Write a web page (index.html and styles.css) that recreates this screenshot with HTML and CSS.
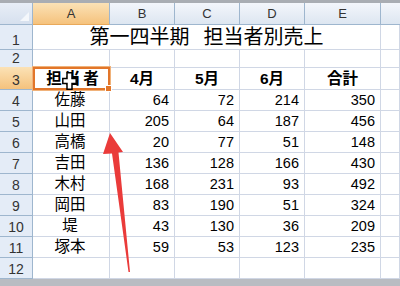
FILE: index.html
```html
<!DOCTYPE html>
<html lang="ja">
<head>
    <meta charset="UTF-8">
    <title>担当者別売上</title>
    <link rel="stylesheet" href="styles.css">
</head>
<body>
<div id="sheet">
    <div class="topbar"></div>
    <div class="row colrow">
        <div class="corner"><span class="tri"></span></div>
        <div class="colhead sel">A</div>
        <div class="colhead">B</div>
        <div class="colhead">C</div>
        <div class="colhead">D</div>
        <div class="colhead">E</div>
        <div class="colhead last"></div>
    </div>
    <div class="row r1">
        <div class="rowhead">1</div>
        <div class="cell title">第一四半期<span class="gap"></span>担当者別売上</div>
        <div class="cell"></div>
    </div>
    <div class="row r2">
        <div class="rowhead">2</div>
        <div class="cell"></div><div class="cell"></div><div class="cell"></div><div class="cell"></div><div class="cell"></div><div class="cell"></div>
    </div>
    <div class="row r3">
        <div class="rowhead sel">3</div>
        <div class="cell head active">担当者<span class="handle"></span>
            <svg class="cursor" width="15" height="18" viewBox="0 0 15 18">
                <path d="M5 0.8h5v5.7h4.2v5h-4.2v5.7h-5v-5.7h-4.2v-5h4.2z" fill="#fff" stroke="#000" stroke-width="1.5"/>
            </svg>
        </div>
        <div class="cell head">4月</div>
        <div class="cell head">5月</div>
        <div class="cell head">6月</div>
        <div class="cell head">合計</div>
        <div class="cell"></div>
    </div>
    <div class="row">
        <div class="rowhead">4</div>
        <div class="cell name">佐藤</div><div class="cell num">64</div><div class="cell num">72</div><div class="cell num">214</div><div class="cell num">350</div><div class="cell"></div>
    </div>
    <div class="row">
        <div class="rowhead">5</div>
        <div class="cell name">山田</div><div class="cell num">205</div><div class="cell num">64</div><div class="cell num">187</div><div class="cell num">456</div><div class="cell"></div>
    </div>
    <div class="row">
        <div class="rowhead">6</div>
        <div class="cell name">高橋</div><div class="cell num">20</div><div class="cell num">77</div><div class="cell num">51</div><div class="cell num">148</div><div class="cell"></div>
    </div>
    <div class="row">
        <div class="rowhead">7</div>
        <div class="cell name">吉田</div><div class="cell num">136</div><div class="cell num">128</div><div class="cell num">166</div><div class="cell num">430</div><div class="cell"></div>
    </div>
    <div class="row">
        <div class="rowhead">8</div>
        <div class="cell name">木村</div><div class="cell num">168</div><div class="cell num">231</div><div class="cell num">93</div><div class="cell num">492</div><div class="cell"></div>
    </div>
    <div class="row">
        <div class="rowhead">9</div>
        <div class="cell name">岡田</div><div class="cell num">83</div><div class="cell num">190</div><div class="cell num">51</div><div class="cell num">324</div><div class="cell"></div>
    </div>
    <div class="row">
        <div class="rowhead">10</div>
        <div class="cell name">堤</div><div class="cell num">43</div><div class="cell num">130</div><div class="cell num">36</div><div class="cell num">209</div><div class="cell"></div>
    </div>
    <div class="row">
        <div class="rowhead">11</div>
        <div class="cell name">塚本</div><div class="cell num">59</div><div class="cell num">53</div><div class="cell num">123</div><div class="cell num">235</div><div class="cell"></div>
    </div>
    <div class="row last-row">
        <div class="rowhead">12</div>
        <div class="cell"></div><div class="cell"></div><div class="cell"></div><div class="cell"></div><div class="cell"></div><div class="cell"></div>
    </div>
    <div class="bottombar"></div>
    <!-- red arrow drawn over the sheet -->
    <svg class="arrow" width="400" height="286" viewBox="0 0 400 286">
        <path d="M110 133 L123 152 L118.5 152.5 L130 272 L128.5 272 L112 153.5 L103 154 Z" fill="#ea3b3a"/>
    </svg>
</div>
</body>
</html>
```

FILE: styles.css
```css
html, body {
    margin: 0;
    padding: 0;
    background: #b9bcc2;
}
#sheet {
    position: relative;
    width: 400px;
    height: 286px;
    overflow: hidden;
    display: flex;
    flex-direction: column;
    background: #fff;
    font-family: "Liberation Sans", "Noto Sans CJK JP", sans-serif;
    color: #000;
}
.topbar {
    flex: none;
    height: 3px;
    background: #a9adb3;
}
.bottombar {
    flex: 1;
    min-height: 2px;
    background: #b9bcc2;
}
.row {
    flex: none;
    display: grid;
    grid-template-columns: 33px 77px 65px 65px 65px 76px 19px;
    height: 21px;
}
.colrow {
    height: 22px;
}
.r1 {
    height: 25px;
}
.r2 {
    height: 17px;
}
.r3 {
    height: 23px;
    position: relative;
    z-index: 1;
}
.corner {
    position: relative;
    background: linear-gradient(#e8eef7, #d6e0ee);
    border-right: 1px solid #9eb6ce;
    border-bottom: 1px solid #9eb6ce;
}
.corner .tri {
    position: absolute;
    right: 3px;
    bottom: 3px;
    width: 0;
    height: 0;
    border-left: 9px solid transparent;
    border-bottom: 9px solid #f4f7fb;
}
.colhead {
    background: linear-gradient(#f3f6fb, #dde6f1);
    border-right: 1px solid #9eb6ce;
    border-bottom: 1px solid #9eb6ce;
    font-size: 13px;
    line-height: 14px;
    color: #333;
    display: flex;
    align-items: center;
    justify-content: center;
}
.colhead.sel {
    background: linear-gradient(#fbe2b6, #f5c27d);
    border-bottom-color: #e9a95a;
}
.colhead.last {
    border-right: none;
}
.rowhead {
    background: #e4ecf7;
    border-right: 1px solid #9eb6ce;
    border-bottom: 1px solid #9eb6ce;
    font-size: 14px;
    line-height: 16px;
    color: #333;
    display: flex;
    align-items: flex-end;
    justify-content: center;
    padding-bottom: 1px;
    box-sizing: border-box;
}
.rowhead.sel {
    background: linear-gradient(#fbe2b6, #f5c27d);
}
.cell {
    border-right: 1px solid #d0d7e5;
    border-bottom: 1px solid #d0d7e5;
    font-size: 14.5px;
    line-height: 18px;
    display: flex;
    align-items: flex-end;
    padding: 0 4px 1px;
    box-sizing: border-box;
    white-space: nowrap;
}
.title {
    grid-column: span 5;
    justify-content: center;
    font-size: 20px;
    line-height: 22px;
    padding-bottom: 1px;
}
.title .gap {
    display: inline-block;
    width: 14px;
}
.head {
    font-weight: bold;
    justify-content: center;
    font-size: 15.5px;
}
.name {
    justify-content: center;
    font-size: 15.5px;
    padding-left: 2px;
}
.num {
    justify-content: flex-end;
    padding-right: 5px;
}
.active {
    position: relative;
    border: 2px solid #e2762a;
    outline: 1px solid #f0b27a;
    z-index: 1;
    letter-spacing: 3px;
    padding-left: 9px;
    padding-bottom: 0;
}
.handle {
    position: absolute;
    right: -4px;
    bottom: -4px;
    width: 5px;
    height: 5px;
    background: #e2762a;
    border: 1px solid #fff;
}
.cursor {
    position: absolute;
    left: 27px;
    top: 3px;
}
.arrow {
    position: absolute;
    left: 0;
    top: 0;
    pointer-events: none;
}
```
